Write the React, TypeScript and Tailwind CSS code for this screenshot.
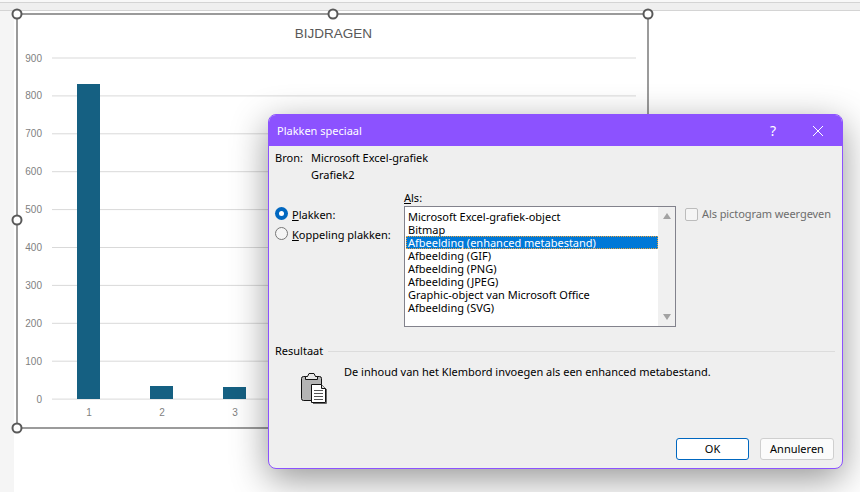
import React from "react";

const yLabels = [900, 800, 700, 600, 500, 400, 300, 200, 100, 0];
const bars = [
  { label: "1", x: 77, top: 84 },
  { label: "2", x: 150, top: 386 },
  { label: "3", x: 223, top: 387 },
];
const handles = [
  [17, 14],
  [333, 14],
  [648, 14],
  [17, 220],
  [17, 428],
];
const formats = [
  "Microsoft Excel-grafiek-object",
  "Bitmap",
  "Afbeelding (enhanced metabestand)",
  "Afbeelding (GIF)",
  "Afbeelding (PNG)",
  "Afbeelding (JPEG)",
  "Graphic-object van Microsoft Office",
  "Afbeelding (SVG)",
];

function Chart() {
  return (
    <svg width="660" height="440" viewBox="0 0 660 440" className="block">
      <rect x="17" y="14" width="631" height="414" fill="#fff" stroke="#595959" strokeWidth="1.2" />
      <text x="333.5" y="38" textAnchor="middle" fontSize="13.5" fill="#595959" fontFamily="'Liberation Sans', sans-serif">
        BIJDRAGEN
      </text>
      {yLabels.map((v, i) => {
        const y = 58 + i * 37.9;
        return (
          <g key={v}>
            <line x1="52" x2="636" y1={y} y2={y} stroke="#d9d9d9" />
            <text x="42" y={y + 3.5} textAnchor="end" fontSize="10" fontWeight="500" fill="#7f7f7f" fontFamily="'Liberation Sans', sans-serif">
              {v}
            </text>
          </g>
        );
      })}
      {bars.map((b) => (
        <g key={b.label}>
          <rect x={b.x} y={b.top} width="23" height={399 - b.top} fill="#156082" />
          <text x={b.x + 12} y="416" textAnchor="middle" fontSize="10" fill="#7f7f7f" fontFamily="'Liberation Sans', sans-serif">
            {b.label}
          </text>
        </g>
      ))}
      {handles.map(([cx, cy]) => (
        <circle key={`${cx}-${cy}`} cx={cx} cy={cy} r="4.5" fill="#fff" stroke="#595959" strokeWidth="2" />
      ))}
    </svg>
  );
}

function ClipboardIcon() {
  return (
    <svg width="30" height="32" viewBox="0 0 30 32" className="block">
      <rect x="1.5" y="4.5" width="20" height="24" rx="2" fill="#b4b4b4" stroke="#111" />
      <path d="M7.5 4.5 L9 1.5 H14 L15.5 4.5 H17.5 V7.5 H5.5 V4.5 Z" fill="#e8e8e8" stroke="#111" />
      <path d="M11.5 12.5 H21.5 L25.5 16.5 V30.5 H11.5 Z" fill="#fff" stroke="#111" />
      <path d="M21.5 12.5 V16.5 H25.5" fill="#ddd" stroke="#111" />
      <path d="M14 18.5 H23 M14 21.5 H23 M14 24.5 H23 M14 27.5 H23" stroke="#555" />
      <path d="M26.5 17 V31.5 H13" fill="none" stroke="#666" />
    </svg>
  );
}

function Dialog() {
  return (
    <div className="absolute left-[268px] top-[114px] flex h-[355px] w-[575px] flex-col overflow-hidden rounded-[8px] border border-[#8c52ff] bg-[#efefef] text-[11px] leading-[16px] text-black shadow-[0_10px_36px_rgba(0,0,0,0.42)] [font-family:'Noto_Sans',sans-serif]">
      <div className="flex h-[31px] shrink-0 items-center justify-between bg-[#8c52ff] pl-[8px] pr-[18px] text-white">
        <span className="text-[11px]">Plakken speciaal</span>
        <div className="flex items-center gap-[36px]">
          <span className="text-[14px]">?</span>
          <svg width="12" height="12" viewBox="0 0 12 12">
            <path d="M1 1 L11 11 M11 1 L1 11" stroke="#fff" strokeWidth="1" />
          </svg>
        </div>
      </div>

      <div className="flex flex-1 flex-col pl-[6px] pr-[7px]">
        <div className="mt-[4px] flex">
          <span className="w-[36px]">Bron:</span>
          <div className="flex flex-col gap-[1px]">
            <span>Microsoft Excel-grafiek</span>
            <span>Grafiek2</span>
          </div>
        </div>

        <div className="mt-[8px] flex">
          <div className="mt-[14px] flex w-[129px] shrink-0 flex-col gap-[4px]">
            <label className="flex h-[16px] items-center gap-[4px]">
              <span className="flex size-[13px] items-center justify-center rounded-full bg-[#0067c0]">
                <span className="size-[5px] rounded-full bg-white" />
              </span>
              <span className="mt-[3px]">
                <u>P</u>lakken:
              </span>
            </label>
            <label className="flex h-[16px] items-center gap-[4px]">
              <span className="size-[13px] rounded-full border border-[#777] bg-[#f5f5f5]" />
              <span className="mt-[3px] whitespace-nowrap">
                <u>K</u>oppeling plakken:
              </span>
            </label>
          </div>

          <div className="flex shrink-0 flex-col">
            <span className="h-[15px] leading-[14px]">
              <u>A</u>ls:
            </span>
            <div className="flex h-[121px] w-[272px] border border-[#82828c] bg-white">
              <div className="flex flex-1 flex-col pl-[1px] pt-[3px]">
                {formats.map((f, i) => (
                  <div
                    key={f}
                    className={
                      i === 2
                        ? "h-[13px] pl-[2px] leading-[13px] whitespace-nowrap text-white bg-[#0078d7] outline-1 -outline-offset-1 outline-dotted outline-[#e8a23c]"
                        : "h-[13px] pl-[2px] leading-[13px] whitespace-nowrap"
                    }
                  >
                    {f}
                  </div>
                ))}
              </div>
              <div className="flex w-[17px] flex-col items-center justify-between bg-[#f0f0f0] py-[6px]">
                <span className="h-0 w-0 border-x-[4px] border-b-[6px] border-x-transparent border-b-[#a3a3a3]" />
                <span className="h-0 w-0 border-x-[4px] border-t-[6px] border-x-transparent border-t-[#a3a3a3]" />
              </div>
            </div>
          </div>

          <div className="ml-[9px] mt-[15px] flex h-[16px] items-center gap-[4px] text-[#6d6d6d]">
            <span className="size-[13px] rounded-[2px] border border-[#bcbcbc] bg-[#f5f5f5]" />
            <span className="whitespace-nowrap tracking-[-0.08px]">Als pictogram weergeven</span>
          </div>
        </div>

        <div className="mt-[16px] flex items-center gap-[5px]">
          <span>Resultaat</span>
          <div className="h-px flex-1 bg-[#dcdcdc]" />
        </div>

        <div className="mt-[3px] flex pl-[25px]">
          <div className="mt-[10px] w-[30px]">
            <ClipboardIcon />
          </div>
          <span className="ml-[14px] mt-[2px]">De inhoud van het Klembord invoegen als een enhanced metabestand.</span>
        </div>

        <div className="mt-auto mb-[8px] flex justify-end gap-[11px] pr-[1px]">
          <button className="h-[22px] w-[73px] rounded-[3px] border border-[#0067c0] bg-white">OK</button>
          <button className="h-[22px] w-[74px] rounded-[3px] border border-[#cfcfcf] bg-[#fbfbfb]">Annuleren</button>
        </div>
      </div>
    </div>
  );
}

export default function App() {
  return (
    <div className="relative h-[492px] w-[860px] overflow-hidden bg-white">
      <div className="h-[2px] bg-[#f8f8f8]" />
      <div className="h-[9px] border-y border-y-[#d4d4d4] bg-[#efefef]" />
      <div className="flex h-[481px]">
        <div className="w-[14px] bg-[#f5f5f5]" />
        <div className="-mt-[11px] -ml-[14px] flex-1">
          <Chart />
        </div>
      </div>
      <Dialog />
    </div>
  );
}
